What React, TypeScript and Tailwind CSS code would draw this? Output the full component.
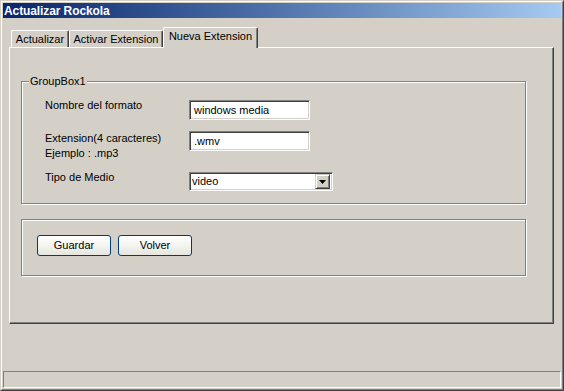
import React from "react";

function SunkenField({ value, w }: { value: string; w: string }) {
  return (
    <div
      className={`${w} h-[20px] bg-white border border-t-[#808080] border-l-[#808080] border-b-white border-r-white shadow-[inset_1px_1px_0_#404040,inset_-1px_-1px_0_#d4d0c8] flex items-center pl-[4px] text-[11px] leading-[13px] text-black`}
    >
      {value}
    </div>
  );
}

function Select({ value }: { value: string }) {
  return (
    <div className="w-[144px] h-[19px] bg-white border border-t-[#808080] border-l-[#808080] border-b-white border-r-white shadow-[inset_1px_1px_0_#404040,inset_-1px_-1px_0_#d4d0c8] flex items-center pl-[2px] pr-[2px] text-[11px] leading-[13px] text-black">
      <span className="flex-1">{value}</span>
      <div className="w-[15px] h-[15px] bg-[#d4d0c8] border border-t-[#d4d0c8] border-l-[#d4d0c8] border-b-[#404040] border-r-[#404040] shadow-[inset_1px_1px_0_#fff,inset_-1px_-1px_0_#808080] flex items-center justify-center">
        <svg width="7" height="4" viewBox="0 0 7 4">
          <polygon points="0,0 7,0 3.5,4" fill="#000" />
        </svg>
      </div>
    </div>
  );
}

function XPButton({ label }: { label: string }) {
  return (
    <button className="w-[74px] h-[21px] rounded-[3px] border border-[#003c74] bg-gradient-to-b from-[#ffffff] via-[#f4f4f0] to-[#e6e5df] text-[11px] leading-[13px] text-black flex items-center justify-center">
      {label}
    </button>
  );
}

export default function App() {
  return (
    <div className="w-[564px] h-[391px] bg-[#d4d0c8] border border-t-[#d4d0c8] border-l-[#d4d0c8] border-r-[#404040] border-b-[#404040] font-['Liberation_Sans',Arial,sans-serif] text-black">
      <div className="w-full h-full border border-t-white border-l-white border-r-[#808080] border-b-[#808080] p-[1px] flex flex-col">
        {/* Title bar */}
        <div className="h-[15px] bg-gradient-to-r from-[#0a246a] to-[#a6caf0] flex items-center pl-[1px]">
          <span className="text-white font-bold text-[12px] leading-[14px] tracking-[-0.1px]">
            Actualizar Rockola
          </span>
        </div>

        {/* Tabs + panel */}
        <div className="ml-[6px] mt-[9px] w-[545px]">
          <div className="flex items-end h-[20px] pl-[2px] text-[11px] leading-[13px]">
            <div className="h-[17px] w-[58px] border-t border-l border-r border-t-white border-l-white border-r-[#404040] rounded-t-[2px] shadow-[inset_-1px_0_0_#808080] flex items-center justify-center pt-[1px]">
              Actualizar
            </div>
            <div className="h-[17px] w-[94px] border-t border-l border-r border-t-white border-l-white border-r-[#404040] rounded-t-[2px] shadow-[inset_-1px_0_0_#808080] flex items-center justify-center pt-[1px]">
              Activar Extension
            </div>
            <div className="relative z-10 h-[21px] -mb-[1px] w-[95px] bg-[#d4d0c8] border-t border-l border-r border-t-white border-l-white border-r-[#404040] rounded-t-[2px] shadow-[inset_-1px_0_0_#808080] flex items-start justify-center pt-[2px]">
              Nueva Extension
            </div>
          </div>

          <div className="h-[277px] border border-t-white border-l-white border-r-[#404040] border-b-[#404040] shadow-[inset_-1px_-1px_0_#808080] pl-[11px] pt-[33px]">
            {/* GroupBox1 */}
            <div className="relative w-[505px] h-[123px] border border-[#808080] shadow-[inset_1px_1px_0_#fff,1px_1px_0_#fff] pt-[18px] pl-[23px] text-[11px]">
              <span className="absolute left-[7px] -top-[8px] px-[1px] bg-[#d4d0c8] leading-[14px]">
                GroupBox1
              </span>
              <div className="flex flex-col gap-[11px]">
                <div className="flex items-start">
                  <div className="w-[144px] -mt-[2px] leading-[15px]">Nombre del formato</div>
                  <SunkenField value="windows media" w="w-[121px]" />
                </div>
                <div className="flex items-start">
                  <div className="w-[144px] leading-[15px]">
                    <div>Extension(4 caracteres)</div>
                    <div>Ejemplo : .mp3</div>
                  </div>
                  <SunkenField value=".wmv" w="w-[121px]" />
                </div>
                <div className="flex items-start">
                  <div className="w-[144px] -mt-[2px] leading-[15px]">Tipo de Medio</div>
                  <Select value="video" />
                </div>
              </div>
            </div>

            {/* GroupBox2 */}
            <div className="mt-[15px] w-[505px] h-[57px] border border-[#808080] shadow-[inset_1px_1px_0_#fff,1px_1px_0_#fff] pt-[15px] pl-[15px] flex gap-[7px] items-start">
              <XPButton label="Guardar" />
              <XPButton label="Volver" />
            </div>
          </div>
        </div>

        {/* Status bar */}
        <div className="mt-auto h-[17px] border border-t-[#808080] border-l-[#808080] border-b-white border-r-white" />
      </div>
    </div>
  );
}
